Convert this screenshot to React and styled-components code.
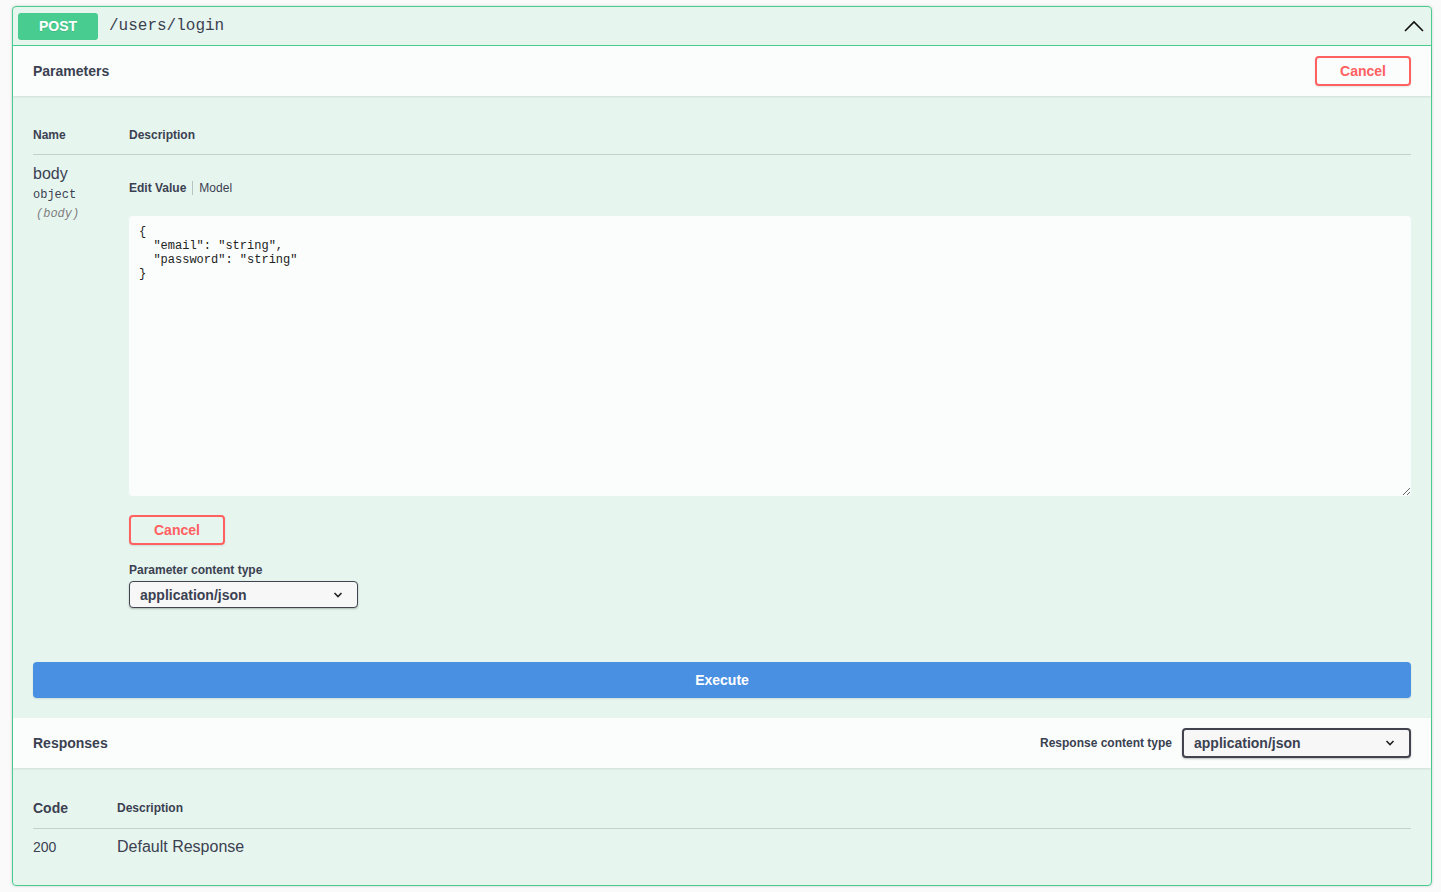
import styled, { createGlobalStyle } from "styled-components";

const GlobalStyle = createGlobalStyle`
  html, body {
    margin: 0;
    padding: 0;
    background: #fafafa;
    font-family: "Liberation Sans", Arial, sans-serif;
    color: #3b4151;
  }
`;

const Page = styled.div`
  padding: 6px 9px 6px 12px;
`;

const OpBlock = styled.div`
  border: 1px solid #49cc90;
  border-radius: 4px;
  background: rgba(73, 204, 144, 0.1);
  box-shadow: 0 0 3px rgba(0, 0, 0, 0.19);
`;

const Summary = styled.div`
  display: flex;
  align-items: center;
  padding: 5px;
  height: 28px;
  border-bottom: 1px solid #49cc90;
`;

const Method = styled.span`
  min-width: 80px;
  height: 27px;
  display: flex;
  align-items: center;
  justify-content: center;
  background: #49cc90;
  color: #fff;
  border-radius: 3px;
  font-size: 14px;
  font-weight: 700;
  text-shadow: 0 1px 0 rgba(0, 0, 0, 0.1);
`;

const Path = styled.span`
  flex: 1;
  padding: 0 11px;
  font-family: "Liberation Mono", "Courier New", monospace;
  font-size: 16px;
  color: #3b4151;
`;

const Arrow = styled.svg`
  width: 20px;
  height: 20px;
  margin-right: 2px;
`;

const SectionHeader = styled.div`
  display: flex;
  align-items: center;
  justify-content: space-between;
  min-height: 50px;
  box-sizing: border-box;
  padding: 8px 20px;
  background: rgba(255, 255, 255, 0.8);
  box-shadow: 0 1px 2px rgba(0, 0, 0, 0.1);
`;

const SectionTitle = styled.h4`
  margin: 0;
  font-size: 14px;
  font-weight: 700;
  color: #3b4151;
`;

const CancelButton = styled.button`
  font-family: "Liberation Sans", Arial, sans-serif;
  font-size: 14px;
  font-weight: 700;
  color: #ff6060;
  background: transparent;
  border: 2px solid #ff6060;
  border-radius: 4px;
  padding: 5px 23px;
  height: 30px;
  box-shadow: 0 1px 2px rgba(0, 0, 0, 0.1);
  cursor: pointer;
  margin-top: ${(p) => p.$mt || 0}px;
`;

const TableWrap = styled.div`
  padding: 20px;
`;

const HeadRow = styled.div`
  display: flex;
  align-items: center;
  height: ${(p) => p.$h || 38}px;
  border-bottom: 1px solid rgba(59, 65, 81, 0.2);
`;

const HeadCell = styled.div`
  width: ${(p) => (p.$w ? `${p.$w}px` : "auto")};
  flex: ${(p) => (p.$w ? "none" : 1)};
  font-size: ${(p) => p.$size || 12}px;
  font-weight: 700;
  color: #3b4151;
`;

const BodyRow = styled.div`
  display: flex;
  padding-top: 10px;
`;

const NameCell = styled.div`
  width: ${(p) => p.$w}px;
  flex: none;
`;

const ParamName = styled.div`
  font-size: 16px;
  line-height: 18px;
`;

const ParamType = styled.div`
  font-family: "Liberation Mono", "Courier New", monospace;
  font-size: 12px;
  font-weight: 400;
  margin-top: 5px;
`;

const ParamIn = styled.div`
  font-family: "Liberation Mono", "Courier New", monospace;
  font-size: 12px;
  font-style: italic;
  color: #808080;
  margin-top: 5px;
  padding-left: 3px;
`;

const DescCell = styled.div`
  flex: 1;
  min-width: 0;
`;

const Tabs = styled.div`
  display: flex;
  align-items: center;
  margin-top: 16px;
  font-size: 12px;
`;

const Tab = styled.span`
  font-weight: ${(p) => (p.$active ? 700 : 400)};
  padding: 0 6px 0 0;
  & + & {
    border-left: 1px solid rgba(0, 0, 0, 0.2);
    padding-left: 6px;
  }
`;

const Editor = styled.textarea`
  display: block;
  width: 100%;
  box-sizing: border-box;
  height: 280px;
  margin-top: 21px;
  padding: 9px 10px;
  border: none;
  border-radius: 4px;
  outline: none;
  background: rgba(255, 255, 255, 0.8);
  font-family: "Liberation Mono", "Courier New", monospace;
  font-size: 12px;
  font-weight: 400;
  line-height: 14px;
  color: #222;
  resize: vertical;
`;

const Label = styled.div`
  font-size: 12px;
  font-weight: 700;
  color: #3b4151;
  margin-top: ${(p) => p.$mt || 0}px;
  margin-right: ${(p) => p.$mr || 0}px;
`;

const Select = styled.div`
  position: relative;
  box-sizing: border-box;
  width: 229px;
  height: ${(p) => p.$h}px;
  margin-top: ${(p) => p.$mt || 0}px;
  display: flex;
  align-items: center;
  padding: 0 10px;
  border: ${(p) => p.$bw}px solid #41444e;
  border-radius: 4px;
  background: #f7f7f7;
  box-shadow: 0 1px 2px 0 rgba(0, 0, 0, 0.25);
  font-size: 14px;
  font-weight: 700;
  color: #3b4151;
`;

const Chevron = styled.svg`
  position: absolute;
  right: 14px;
  top: 50%;
  margin-top: -5px;
  width: 10px;
  height: 10px;
`;

const ExecuteWrap = styled.div`
  padding: 34px 20px 20px;
`;

const ExecuteButton = styled.button`
  width: 100%;
  height: 36px;
  background: #4990e2;
  border: 2px solid #4990e2;
  border-radius: 4px;
  color: #fff;
  font-family: "Liberation Sans", Arial, sans-serif;
  font-size: 14px;
  font-weight: 700;
  box-shadow: 0 1px 2px rgba(0, 0, 0, 0.1);
  cursor: pointer;
`;

const RightGroup = styled.div`
  display: flex;
  align-items: center;
`;

const Code = styled.div`
  width: 84px;
  flex: none;
  font-size: 14px;
`;

const ResponseDesc = styled.div`
  font-size: 16px;
`;

const ResponseRow = styled.div`
  display: flex;
  align-items: center;
  height: 36px;
`;

function SelectBox({ h, bw, mt }) {
  return (
    <Select $h={h} $bw={bw} $mt={mt}>
      application/json
      <Chevron viewBox="0 0 10 10">
        <polyline points="1.5,3 5,6.5 8.5,3" fill="none" stroke="#222" strokeWidth="1.6" />
      </Chevron>
    </Select>
  );
}

const example = `{
  "email": "string",
  "password": "string"
}`;

export default function App() {
  return (
    <>
      <GlobalStyle />
      <Page>
        <OpBlock>
          <Summary>
            <Method>POST</Method>
            <Path>/users/login</Path>
            <Arrow viewBox="0 0 20 20">
              <polyline points="1,15 10,6 19,15" fill="none" stroke="#111" strokeWidth="1.6" />
            </Arrow>
          </Summary>

          <SectionHeader>
            <SectionTitle>Parameters</SectionTitle>
            <CancelButton>Cancel</CancelButton>
          </SectionHeader>

          <TableWrap>
            <HeadRow>
              <HeadCell $w={96}>Name</HeadCell>
              <HeadCell>Description</HeadCell>
            </HeadRow>
            <BodyRow>
              <NameCell $w={96}>
                <ParamName>body</ParamName>
                <ParamType>object</ParamType>
                <ParamIn>(body)</ParamIn>
              </NameCell>
              <DescCell>
                <Tabs>
                  <Tab $active>Edit Value</Tab>
                  <Tab>Model</Tab>
                </Tabs>
                <Editor defaultValue={example} spellCheck={false} />
                <CancelButton $mt={19}>Cancel</CancelButton>
                <Label $mt={18}>Parameter content type</Label>
                <SelectBox h={27} bw={1} mt={4} />
              </DescCell>
            </BodyRow>
          </TableWrap>

          <ExecuteWrap>
            <ExecuteButton>Execute</ExecuteButton>
          </ExecuteWrap>

          <SectionHeader>
            <SectionTitle>Responses</SectionTitle>
            <RightGroup>
              <Label $mr={10}>Response content type</Label>
              <SelectBox h={30} bw={2} />
            </RightGroup>
          </SectionHeader>

          <TableWrap>
            <HeadRow $h={40}>
              <HeadCell $w={84} $size={14}>Code</HeadCell>
              <HeadCell>Description</HeadCell>
            </HeadRow>
            <ResponseRow>
              <Code>200</Code>
              <ResponseDesc>Default Response</ResponseDesc>
            </ResponseRow>
          </TableWrap>
        </OpBlock>
      </Page>
    </>
  );
}
